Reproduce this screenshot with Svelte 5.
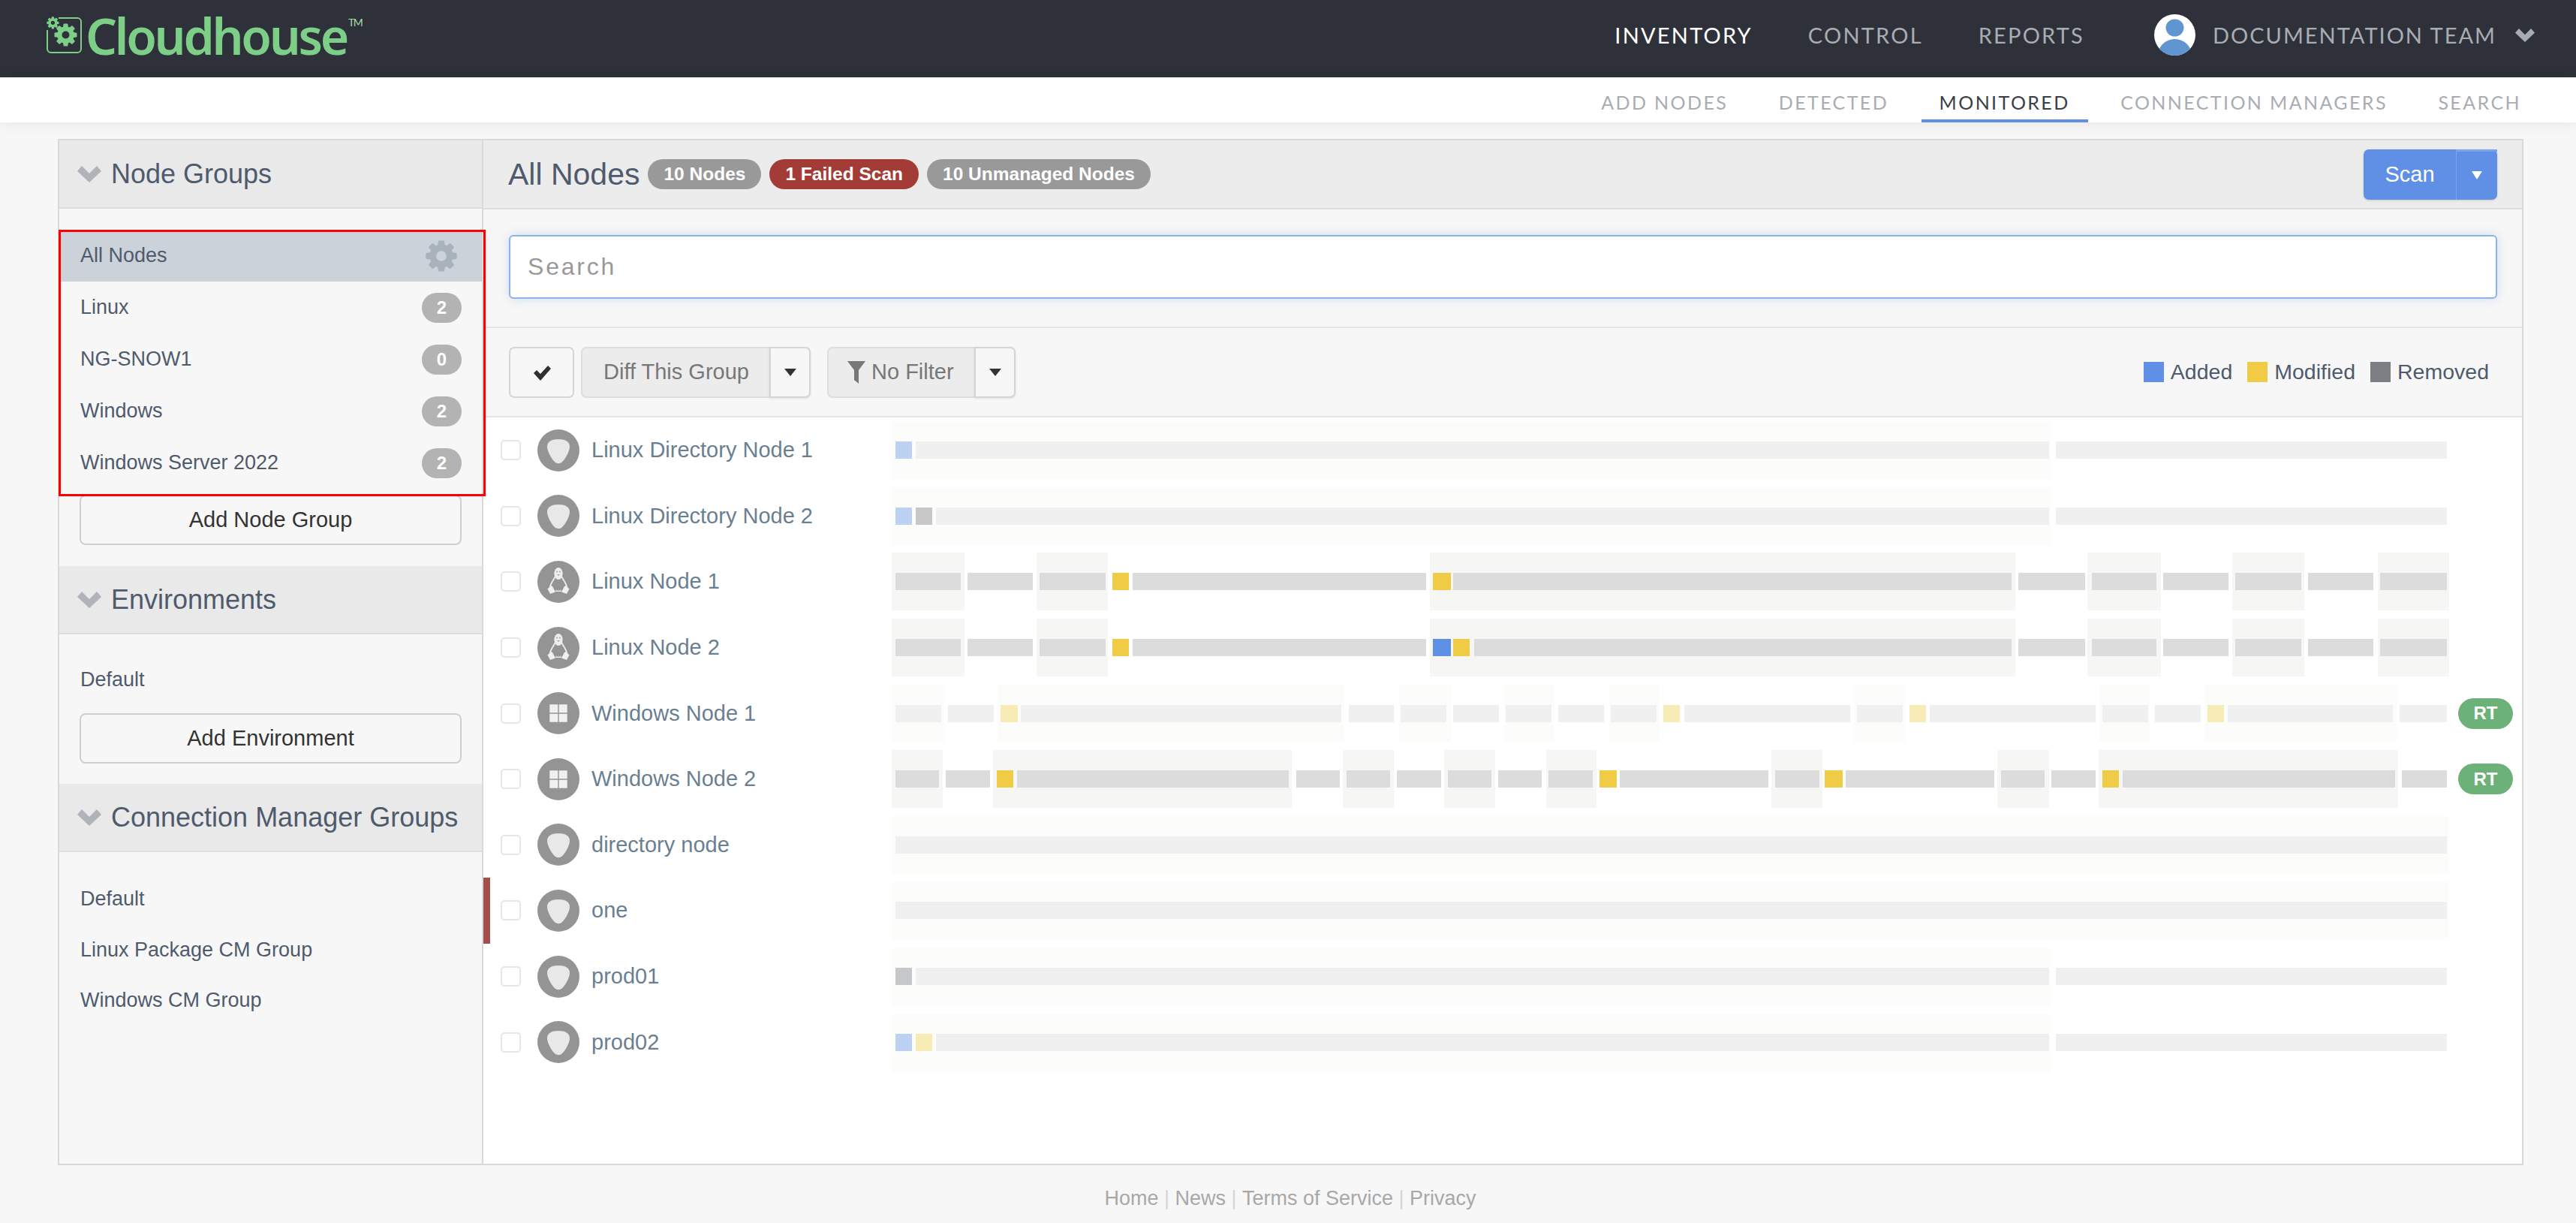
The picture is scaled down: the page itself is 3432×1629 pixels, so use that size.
<script>
  const COG = 'M1152 896q0-106-75-181t-181-75-181 75-75 181 75 181 181 75 181-75 75-181zm512-109v222q0 12-8 23t-20 13l-185 28q-19 54-39 91 35 50 107 138 10 12 10 25t-9 23q-27 37-99 108t-94 71q-12 0-26-9l-138-108q-44 23-91 38-16 136-29 186-7 28-36 28h-222q-14 0-24.5-8.5t-11.5-21.5l-28-184q-49-16-90-37l-141 107q-10 9-25 9-14 0-25-11-126-114-165-168-7-10-7-23 0-12 8-23 15-21 51-66.5t54-70.5q-27-50-41-99l-183-27q-13-2-21-12.5t-8-23.5v-222q0-12 8-23t19-13l186-28q14-46 39-92-40-57-107-138-10-12-10-24 0-10 9-23 26-36 98.5-107.5t94.5-71.5q13 0 26 10l138 107q44-23 91-38 16-136 29-186 7-28 36-28h222q14 0 24.5 8.5t11.5 21.5l28 184q49 16 90 37l142-107q9-9 24-9 13 0 25 10 129 119 165 170 7 8 7 22 0 12-8 23-15 21-51 66.5t-54 70.5q26 50 41 98l183 28q13 2 21 12.5t8 23.5z';

  const groups = [
    { name: 'All Nodes', selected: true },
    { name: 'Linux', count: 2 },
    { name: 'NG-SNOW1', count: 0 },
    { name: 'Windows', count: 2 },
    { name: 'Windows Server 2022', count: 2 }
  ];

  // timeline spans are written as [start, end, hasBand, bars], bars as [kind, x0, x1], in page x
  const tail = [2732, 3263, 0, [['f', 2739, 3260]]];
  const linuxEnd = [
    [2685, 2781, 0, [['n', 2689, 2778]]],
    [2781, 2879, 1, [['n', 2787, 2873]]],
    [2879, 2974, 0, [['n', 2882, 2969]]],
    [2974, 3070, 1, [['n', 2978, 3066]]],
    [3070, 3168, 0, [['n', 3075, 3162]]],
    [3168, 3263, 1, [['n', 3171, 3260]]]
  ];
  const linuxStart = [
    [1188, 1285, 1, [['n', 1193, 1280]]],
    [1285, 1381, 0, [['n', 1289, 1376]]],
    [1381, 1476, 1, [['n', 1385, 1473]]],
    [1476, 1905, 0, [['y', 1482, 1504], ['n', 1509, 1900]]]
  ];

  const win1 = [
    [1188, 1258, 1, [['f', 1193, 1254]]],
    [1258, 1329, 0, [['f', 1263, 1324]]],
    [1329, 1791, 1, [['yp', 1333, 1356], ['f', 1360, 1787]]],
    [1791, 1864, 0, [['f', 1797, 1857]]],
    [1864, 1933, 1, [['f', 1866, 1927]]],
    [1933, 2004, 0, [['f', 1936, 1997]]],
    [2004, 2071, 1, [['f', 2006, 2067]]],
    [2071, 2144, 0, [['f', 2076, 2137]]],
    [2144, 2211, 1, [['f', 2146, 2207]]],
    [2211, 2470, 0, [['yp', 2216, 2238], ['f', 2244, 2465]]],
    [2470, 2538, 1, [['f', 2474, 2535]]],
    [2538, 2797, 0, [['yp', 2544, 2566], ['f', 2571, 2792]]],
    [2797, 2864, 1, [['f', 2801, 2862]]],
    [2864, 2937, 0, [['f', 2871, 2932]]],
    [2937, 3193, 1, [['yp', 2941, 2963], ['f', 2968, 3188]]],
    [3193, 3263, 0, [['f', 3197, 3260]]]
  ];
  const win2 = [
    [1188, 1256, 1, [['n', 1193, 1251]]],
    [1256, 1323, 0, [['n', 1260, 1319]]],
    [1323, 1721, 1, [['y', 1328, 1350], ['n', 1355, 1717]]],
    [1721, 1789, 0, [['n', 1727, 1785]]],
    [1789, 1857, 1, [['n', 1794, 1852]]],
    [1857, 1924, 0, [['n', 1861, 1920]]],
    [1924, 1992, 1, [['n', 1929, 1987]]],
    [1992, 2060, 0, [['n', 1996, 2054]]],
    [2060, 2127, 1, [['n', 2063, 2122]]],
    [2127, 2360, 0, [['y', 2131, 2154], ['n', 2158, 2356]]],
    [2360, 2428, 1, [['n', 2365, 2424]]],
    [2428, 2661, 0, [['y', 2431, 2455], ['n', 2459, 2657]]],
    [2661, 2730, 1, [['n', 2666, 2724]]],
    [2730, 2796, 0, [['n', 2733, 2792]]],
    [2796, 3195, 1, [['y', 2801, 2823], ['n', 2828, 3191]]],
    [3195, 3263, 0, [['n', 3200, 3260]]]
  ];

  const nodes = [
    { name: 'Linux Directory Node 1', icon: 'dir', faded: true, spans: [[1188, 2732, 1, [['bp', 1193, 1215], ['f', 1220, 2730]]], tail] },
    { name: 'Linux Directory Node 2', icon: 'dir', faded: true, spans: [[1188, 2732, 1, [['bp', 1193, 1215], ['gp', 1220, 1242], ['f', 1247, 2730]]], tail] },
    { name: 'Linux Node 1', icon: 'tux', spans: [...linuxStart, [1905, 2685, 1, [['y', 1909, 1933], ['n', 1936, 2680]]], ...linuxEnd] },
    { name: 'Linux Node 2', icon: 'tux', spans: [...linuxStart, [1905, 2685, 1, [['b', 1909, 1933], ['y', 1936, 1958], ['n', 1964, 2680]]], ...linuxEnd] },
    { name: 'Windows Node 1', icon: 'win', faded: true, rt: true, spans: win1 },
    { name: 'Windows Node 2', icon: 'win', rt: true, spans: win2 },
    { name: 'directory node', icon: 'dir', faded: true, spans: [[1188, 3263, 1, [['f', 1193, 3260]]]] },
    { name: 'one', icon: 'dir', faded: true, failed: true, spans: [[1188, 3263, 1, [['f', 1193, 3260]]]] },
    { name: 'prod01', icon: 'dir', faded: true, spans: [[1188, 2732, 1, [['gp', 1193, 1215], ['f', 1220, 2730]]], tail] },
    { name: 'prod02', icon: 'dir', faded: true, spans: [[1188, 2732, 1, [['bp', 1193, 1215], ['yp', 1220, 1242], ['f', 1247, 2730]]], tail] }
  ];

  function barsOf(span) {
    let prev = span[0];
    return span[3].map(([kind, x0, x1]) => {
      const bar = { kind, width: x1 - x0, gap: x0 - prev };
      prev = x1;
      return bar;
    });
  }
</script>

<div class="app">
  <header class="topbar">
    <div class="logo">
      <svg width="49" height="50" viewBox="0 0 49 50" fill="#7dce87">
        <path d="M17 2h25a5 5 0 0 1 5 5v36a5 5 0 0 1-5 5H7a5 5 0 0 1-5-5V18" fill="none" stroke="#7dce87" stroke-width="2"/>
        <path d={COG} transform="translate(0 -1) scale(0.0105)"/>
        <path d={COG} transform="translate(9 7) scale(0.0195)"/>
      </svg>
      <span class="wordmark">Cloudhouse</span>
      <span class="tm">TM</span>
    </div>
    <nav class="mainnav">
      <span class="active">INVENTORY</span>
      <span>CONTROL</span>
      <span>REPORTS</span>
    </nav>
    <div class="team">
      <svg width="55" height="55" viewBox="0 0 55 55">
        <defs><clipPath id="av"><circle cx="27.5" cy="27.5" r="27.5"/></clipPath></defs>
        <circle cx="27.5" cy="27.5" r="27.5" fill="#fff"/>
        <g clip-path="url(#av)" fill="#5f96d1">
          <ellipse cx="27.5" cy="18" rx="12" ry="11.5"/>
          <ellipse cx="27.5" cy="56" rx="23" ry="23"/>
        </g>
      </svg>
      <span>DOCUMENTATION TEAM</span>
      <svg class="team-chevron" width="26" height="18" viewBox="0 0 32 22"><path d="M0 7 6 0l10 10L26 0l6 7-16 15z" fill="#a8adb3"/></svg>
    </div>
  </header>

  <div class="subnav">
    <span class="tab">ADD NODES</span>
    <span class="tab">DETECTED</span>
    <span class="tab active">MONITORED</span>
    <span class="tab">CONNECTION MANAGERS</span>
    <span class="tab">SEARCH</span>
  </div>

  <main class="page">
    <div class="panel">
      <aside class="sidebar">
        <section>
          <h2 class="side-head">
            <svg width="32" height="22" viewBox="0 0 32 22"><path d="M0 7 6 0l10 10L26 0l6 7-16 15z" fill="#b0b3ba"/></svg>
            Node Groups
          </h2>
          <div class="side-body nodes-body">
            {#each groups as group}
              <div class="group-row" class:selected={group.selected}>
                <span>{group.name}</span>
                {#if group.selected}
                  <svg class="cog" width="48" height="48" viewBox="0 0 1792 1792"><path d={COG} fill="#a7b2bc"/></svg>
                {:else}
                  <span class="count">{group.count}</span>
                {/if}
              </div>
            {/each}
            <button class="add-btn node-add">Add Node Group</button>
            <div class="highlight"></div>
          </div>
        </section>
        <section>
          <h2 class="side-head">
            <svg width="32" height="22" viewBox="0 0 32 22"><path d="M0 7 6 0l10 10L26 0l6 7-16 15z" fill="#b0b3ba"/></svg>
            Environments
          </h2>
          <div class="side-body env-body">
            <div class="group-row"><span>Default</span></div>
            <button class="add-btn">Add Environment</button>
          </div>
        </section>
        <section>
          <h2 class="side-head">
            <svg width="32" height="22" viewBox="0 0 32 22"><path d="M0 7 6 0l10 10L26 0l6 7-16 15z" fill="#b0b3ba"/></svg>
            Connection Manager Groups
          </h2>
          <div class="side-body cm-body">
            <div class="group-row short"><span>Default</span></div>
            <div class="group-row short"><span>Linux Package CM Group</span></div>
            <div class="group-row short"><span>Windows CM Group</span></div>
          </div>
        </section>
      </aside>

      <div class="content">
        <div class="content-head">
          <h1>All Nodes</h1>
          <span class="pill">10 Nodes</span>
          <span class="pill danger">1 Failed Scan</span>
          <span class="pill">10 Unmanaged Nodes</span>
          <div class="scan">
            <span class="scan-main">Scan</span>
            <span class="scan-caret"><i></i></span>
          </div>
        </div>

        <div class="search-block">
          <div class="search">Search</div>
        </div>

        <div class="toolbar">
          <button class="check-btn" aria-label="Select all">
            <svg width="26" height="26" viewBox="0 0 26 26"><path d="M2 14l4-4 5 5L21 4l4 4-14 16z" fill="#2f2f2f"/></svg>
          </button>
          <div class="split">
            <span class="split-main diff">Diff This Group</span>
            <span class="split-caret"><i></i></span>
          </div>
          <div class="split filter">
            <span class="split-main nofilter">
              <svg width="24" height="30" viewBox="0 0 24 30"><path d="M0 0h24L15 12v18l-6-5V12z" fill="#777"/></svg>
              No Filter
            </span>
            <span class="split-caret"><i></i></span>
          </div>
          <div class="legend">
            <i class="swatch added"></i><span>Added</span>
            <i class="swatch modified"></i><span>Modified</span>
            <i class="swatch removed"></i><span>Removed</span>
          </div>
        </div>

        <div class="rows">
          {#each nodes as node}
            <div class="row" class:failed={node.failed}>
              <span class="checkbox"></span>
              <svg class="os" width="56" height="56" viewBox="0 0 56 56">
                <circle cx="28" cy="28" r="28" fill="#949494"/>
                {#if node.icon === 'dir'}
                  <path d="M28 13c9 0 15 3 15 10 0 6-6 17-11 21-2 1.6-6 1.6-8 0C19 40 13 29 13 23c0-7 6-10 15-10z" fill="#e8e8e8"/>
                {:else if node.icon === 'tux'}
                  <ellipse cx="28" cy="17" rx="5.6" ry="8" fill="#eee"/>
                  <path d="M23.5 21C22 26 17.5 29 16.5 36M32.5 21C34 26 38.5 29 39.5 36" fill="none" stroke="#eee" stroke-width="1.8"/>
                  <path d="M13.5 37.5 18 33l2 1 4 7.5-7 2.5zM42.5 37.5 38 33l-2 1-4 7.5 7 2.5zM24 39.5h8V41h-8z" fill="#f0f0f0"/>
                  <circle cx="26" cy="14.5" r=".9" fill="#999"/>
                  <circle cx="30" cy="14.5" r=".9" fill="#999"/>
                  <path d="M25.8 18h4.4L28 20z" fill="#aaa"/>
                {:else}
                  <path d="M16.3 16.3h11v11h-11zM28.7 16.3h11v11h-11zM16.3 28.7h11v11h-11zM28.7 28.7h11v11h-11z" fill="#f0f0f0"/>
                {/if}
              </svg>
              <span class="node-name">{node.name}</span>
              <div class="track" class:faded={node.faded}>
                {#each node.spans as span}
                  <div class="span" class:band={span[2]} style="width: {span[1] - span[0]}px">
                    {#each barsOf(span) as bar}
                      <i class="bar {bar.kind}" style="width: {bar.width}px; margin-left: {bar.gap}px"></i>
                    {/each}
                  </div>
                {/each}
              </div>
              {#if node.rt}<span class="rt">RT</span>{/if}
            </div>
          {/each}
        </div>
      </div>
    </div>
  </main>

  <footer class="footer">
    <span>Home</span><b>|</b><span>News</span><b>|</b><span>Terms of Service</span><b>|</b><span>Privacy</span>
  </footer>
</div>

<style>
  :global(body) {
    margin: 0;
    background: #f7f7f7;
    font-family: "Liberation Sans", Arial, sans-serif;
  }

  .app {
    display: flex;
    flex-direction: column;
    min-height: 100vh;
    box-sizing: border-box;
  }

  .topbar {
    height: 103px;
    flex: none;
    box-sizing: border-box;
    background: #2e3139;
    display: flex;
    align-items: center;
    padding: 0 55px 10px 61px;
    font-family: Lato, sans-serif;
  }

  .logo {
    display: flex;
    align-items: center;
    position: relative;
  }

  .wordmark {
    font-family: "Noto Sans", sans-serif;
    font-weight: 600;
    font-size: 66px;
    line-height: 1;
    letter-spacing: -3.3px;
    color: #7dce87;
    margin-left: 4px;
  }

  .tm {
    font-size: 14px;
    letter-spacing: -1.5px;
    color: #a8d9ad;
    margin: -34px 0 0 2px;
  }

  .mainnav {
    margin-left: auto;
    display: flex;
    gap: 74px;
    font-size: 29px;
    letter-spacing: 2.2px;
    color: #a8adb3;
  }

  .mainnav .active {
    color: #fff;
  }

  .team {
    display: flex;
    align-items: center;
    margin-left: 93px;
    font-size: 29px;
    letter-spacing: 2px;
    color: #a8adb3;
  }

  .team svg:first-child {
    margin-right: 23px;
  }

  .team-chevron {
    margin-left: 25px;
  }

  .subnav {
    height: 60px;
    flex: none;
    background: #fff;
    display: flex;
    justify-content: flex-end;
    gap: 19.5px;
    padding-right: 49px;
    font-family: Lato, sans-serif;
    font-size: 25px;
    letter-spacing: 2.4px;
    color: #a9adb3;
    box-shadow: 0 2px 20px rgba(0, 0, 0, 0.07);
    position: relative;
  }

  .tab {
    display: flex;
    align-items: center;
    padding: 9px 24px 0;
    border-bottom: 4px solid transparent;
  }

  .tab.active {
    color: #3a3f47;
    border-bottom-color: #6090e6;
  }

  .page {
    flex: 1;
    display: flex;
    padding: 22px 70px 0 77px;
  }

  .panel {
    flex: 1;
    display: flex;
    border: 2px solid #d9d9d9;
    background: #fff;
    position: relative;
  }

  .sidebar {
    width: 565px;
    flex: none;
    box-sizing: border-box;
    background: #f7f7f7;
    border-right: 2px solid #d9d9d9;
  }

  .side-head {
    margin: 0;
    height: 91px;
    box-sizing: border-box;
    background: #e9e9e9;
    border-bottom: 2px solid #dedede;
    display: flex;
    align-items: center;
    gap: 13px;
    padding-left: 24px;
    font-size: 36px;
    font-weight: 400;
    color: #4f5b6d;
  }

  .side-body {
    position: relative;
  }

  .nodes-body {
    padding-top: 28px;
    padding-bottom: 28px;
  }

  .env-body {
    padding-top: 26px;
    padding-bottom: 27px;
  }

  .cm-body {
    padding-top: 29px;
  }

  .group-row {
    height: 69px;
    display: flex;
    align-items: center;
    justify-content: space-between;
    padding: 0 27px 0 28px;
    font-size: 27px;
    color: #4f5b6d;
  }

  .group-row.short {
    height: 67.5px;
  }

  .group-row.selected {
    background: #cbd2da;
    padding-right: 30px;
  }

  .count {
    width: 53px;
    height: 40px;
    border-radius: 20px;
    background: #b3b3b3;
    color: #fff;
    font-weight: 700;
    font-size: 24px;
    display: flex;
    align-items: center;
    justify-content: center;
  }

  .add-btn {
    display: block;
    width: 509px;
    height: 67px;
    margin: 10px 0 0 27px;
    box-sizing: border-box;
    border: 2px solid #cfcfcf;
    border-radius: 8px;
    background: #f7f7f7;
    font-family: inherit;
    font-size: 29px;
    color: #333;
  }

  .add-btn.node-add {
    margin-top: 8px;
  }

  .highlight {
    position: absolute;
    left: -1px;
    top: 28px;
    width: 569px;
    height: 355px;
    box-sizing: border-box;
    border: 3px solid #f00;
    pointer-events: none;
    z-index: 2;
  }

  .content {
    flex: 1;
    min-width: 0;
    display: flex;
    flex-direction: column;
  }

  .content-head {
    height: 92px;
    flex: none;
    box-sizing: border-box;
    background: #ececec;
    border-bottom: 2px solid #dedede;
    display: flex;
    align-items: center;
    gap: 11px;
    padding: 0 33px;
  }

  .content-head h1 {
    margin: 0;
    font-size: 41px;
    font-weight: 400;
    color: #4f5b6d;
  }

  .pill {
    height: 40px;
    border-radius: 20px;
    padding: 0 21px;
    display: flex;
    align-items: center;
    background: #999;
    color: #fff;
    font-weight: 700;
    font-size: 24.5px;
  }

  .pill.danger {
    background: #a33c36;
  }

  .scan {
    margin-left: auto;
    display: flex;
    height: 67px;
    border-radius: 7px;
    background: #6090e6;
    color: #fff;
    font-size: 29px;
    box-shadow: 0 1px 3px rgba(0, 0, 0, 0.15);
  }

  .scan-main {
    width: 123px;
    display: flex;
    align-items: center;
    justify-content: center;
  }

  .scan-caret {
    width: 55px;
    display: flex;
    align-items: center;
    justify-content: center;
    border-left: 1px solid #7aa3eb;
    border-top: 3px solid #7aa3eb;
    box-sizing: border-box;
  }

  .scan-caret i {
    border-left: 7px solid transparent;
    border-right: 7px solid transparent;
    border-top: 11px solid #fff;
  }

  .search-block {
    height: 158px;
    flex: none;
    box-sizing: border-box;
    background: #f7f7f7;
    border-bottom: 2px solid #e3e3e3;
    padding: 34px 33px 0 34px;
  }

  .search {
    height: 85px;
    box-sizing: border-box;
    background: #fff;
    border: 2px solid #8ab3e8;
    border-radius: 6px;
    box-shadow: 0 0 14px rgba(96, 144, 230, 0.25);
    display: flex;
    align-items: center;
    padding-left: 23px;
    font-size: 32px;
    letter-spacing: 2.8px;
    color: #999;
  }

  .toolbar {
    height: 119px;
    flex: none;
    box-sizing: border-box;
    background: #f7f7f7;
    border-bottom: 2px solid #e3e3e3;
    display: flex;
    align-items: center;
    padding: 0 44px 0 34px;
  }

  .check-btn {
    width: 87px;
    height: 68px;
    box-sizing: border-box;
    border: 2px solid #d5d5d5;
    border-radius: 7px;
    background: #f7f7f7;
    display: flex;
    align-items: center;
    justify-content: center;
    padding: 0;
  }

  .split {
    display: flex;
    height: 68px;
    margin-left: 9px;
    font-size: 29px;
    color: #777;
  }

  .split.filter {
    margin-left: 22px;
  }

  .split-main {
    display: flex;
    align-items: center;
    box-sizing: border-box;
    background: #ececec;
    border: 2px solid #dedede;
    border-right: none;
    border-radius: 7px 0 0 7px;
  }

  .diff {
    width: 251px;
    padding-left: 28px;
  }

  .nofilter {
    width: 196px;
    padding-left: 25px;
    gap: 8px;
  }

  .split-caret {
    width: 55px;
    box-sizing: border-box;
    border: 2px solid #d5d5d5;
    border-radius: 0 7px 7px 0;
    background: #f7f7f7;
    box-shadow: 0 1px 3px rgba(0, 0, 0, 0.1);
    display: flex;
    align-items: center;
    justify-content: center;
  }

  .split-caret i {
    border-left: 8px solid transparent;
    border-right: 8px solid transparent;
    border-top: 10px solid #333;
  }

  .legend {
    margin-left: auto;
    display: flex;
    align-items: center;
    font-size: 28.5px;
    color: #4f5b6d;
  }

  .swatch {
    width: 27px;
    height: 27px;
    margin-right: 9px;
  }

  .swatch ~ .swatch {
    margin-left: 20px;
  }

  .added {
    background: #6090e6;
  }

  .modified {
    background: #f0cb45;
  }

  .removed {
    background: #7b7e82;
  }

  .rows {
    flex: 1;
    background: #fff;
  }

  .row {
    position: relative;
    height: 87.6px;
    display: flex;
    align-items: center;
    padding-left: 23px;
  }

  .row.failed::before {
    content: '';
    position: absolute;
    left: 0;
    top: 0;
    bottom: 0;
    width: 9px;
    background: #a54d4b;
  }

  .checkbox {
    width: 27px;
    height: 27px;
    box-sizing: border-box;
    border: 2px solid #e6e6e6;
    border-radius: 5px;
    background: #fff;
    flex: none;
  }

  .os {
    margin-left: 22px;
    flex: none;
  }

  .node-name {
    width: 416px;
    flex: none;
    box-sizing: border-box;
    padding-left: 16px;
    font-size: 29px;
    color: #6a7f92;
  }

  .track {
    display: flex;
    --band: #f6f6f4;
  }

  .track.faded {
    --band: #fcfcfa;
  }

  .span {
    height: 77px;
    display: flex;
    align-items: center;
  }

  .span.band {
    background: var(--band);
  }

  .bar {
    height: 23px;
    flex: none;
  }

  .n { background: #dcdcdc; }
  .f { background: #f0f0f0; }
  .y { background: #f0cb45; }
  .yp { background: #f7ebb6; }
  .b { background: #6090e6; }
  .bp { background: #bdd2f3; }
  .gp { background: #c6c7c9; }

  .rt {
    margin-left: 12px;
    width: 73px;
    height: 41px;
    border-radius: 21px;
    background: #6cb178;
    color: #fff;
    font-weight: 700;
    font-size: 24px;
    display: flex;
    align-items: center;
    justify-content: center;
  }

  .footer {
    height: 77px;
    flex: none;
    box-sizing: border-box;
    padding: 12px 0 0 6px;
    display: flex;
    align-items: center;
    justify-content: center;
    font-size: 27px;
    color: #a8a8a8;
  }

  .footer b {
    font-weight: 400;
    color: #d5d5d5;
    margin: 0 7.5px;
  }
</style>
